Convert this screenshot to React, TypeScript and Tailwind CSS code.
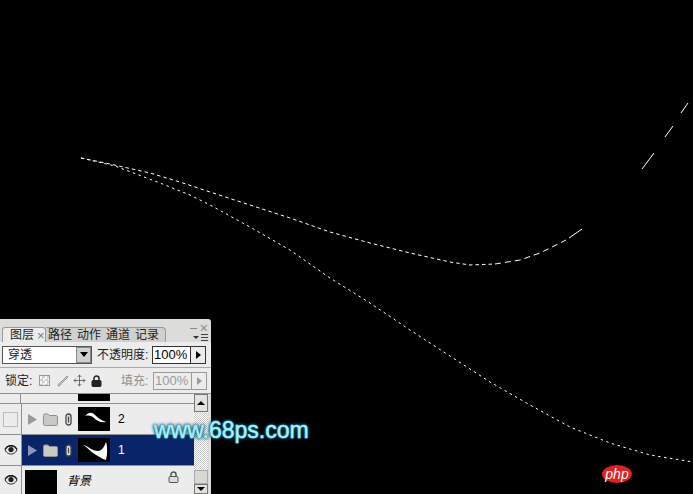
import type { ReactNode } from "react";
import { Move } from "lucide-react";

const cjk = "font-['Liberation_Sans','Noto_Sans_CJK_SC',sans-serif]";

const Eye = () => (
    <svg width="14" height="10" viewBox="0 0 14 10">
        <path d="M1 5C3 1.500 5 1 7 1s4 .5 6 4c-2 3.500-4 4-6 4S3 8.500 1 5z" fill="#e8e8e8" stroke="#222" strokeWidth="1" />
        <circle cx="7" cy="4.500" r="2.600" fill="#222" />
        <path d="M1 4C3 1 5 .5 7 .5s4 .5 6 3.500" fill="none" stroke="#111" strokeWidth="1.300" />
    </svg>
);

const Folder = () => (
    <svg width="15" height="13" viewBox="0 0 15 13">
        <path d="M.5 2.500c0-1 .5-1.500 1.500-1.500h3l1.500 1.500H13c1 0 1.500.5 1.500 1.500v7c0 1-.5 1.500-1.500 1.500H2c-1 0-1.500-.5-1.500-1.500z" fill="#c9c9c6" stroke="#8f8f8c" />
    </svg>
);

const Link = () => (
    <svg width="7" height="13" viewBox="0 0 7 13">
        <rect x="1" y="1" width="5" height="11" rx="2.500" fill="#e8e8e8" stroke="#444" strokeWidth="1.300" />
        <path d="M3.500 3.500v6" stroke="#444" strokeWidth="1.300" />
    </svg>
);

const Arrow = ({ color }: { color: string }) => (
    <svg width="9" height="11" viewBox="0 0 9 11">
        <path d="M0 0l9 5.500L0 11z" fill={color} />
    </svg>
);

const LockIcon = ({ open }: { open?: boolean }) => (
    <svg width="11" height="12" viewBox="0 0 11 12">
        <path d="M3 6V3.500a2.500 2.500 0 015 0V6" fill="none" stroke={open ? "#555" : "#222"} strokeWidth="1.500" />
        <rect x="1" y="5.500" width="9" height="6" rx="1" fill={open ? "#dcdcdc" : "#222"} stroke={open ? "#555" : "#222"} />
    </svg>
);

const Thumb = ({ children, className }: { children?: ReactNode; className: string }) => (
    <svg viewBox="0 0 32 24" className={`block shrink-0 bg-black ${className}`}>
        {children}
    </svg>
);

const Spin = ({ disabled }: { disabled?: boolean }) => (
    <div className={`flex h-[18px] border ${disabled ? "border-[#9a9a9a] text-[#9a9a9a]" : "border-[#333] bg-white text-black"}`}>
        <div className="flex w-[37px] items-center pl-px text-[13px] leading-none">100%</div>
        <div className={`flex w-[15px] items-center justify-center border-l ${disabled ? "border-[#9a9a9a]" : "border-[#333] bg-[#ececec]"}`}>
            <div className="h-0 w-0 border-y-[4px] border-l-[5px] border-y-transparent border-l-current" />
        </div>
    </div>
);

const tabs = ["路径", "动作", "通道", "记录"];

const LayersPanel = () => (
    <div className={`absolute bottom-0 left-0 flex h-[175px] w-[211px] flex-col rounded-tr-[3px] bg-[#dcdcda] text-[12px] text-[#222] ${cjk}`}>
        <div className="relative flex h-[23px] shrink-0 items-end pl-[2px]">
            <div className="flex h-[15px] w-[44px] shrink-0 items-center gap-[3px] whitespace-nowrap rounded-t-[3px] border-x border-t border-[#999] bg-[#ececec] pl-[7px]">
                <span>图层</span>
                <span className="text-[13px] leading-none text-[#777]">×</span>
            </div>
            <div className="flex h-[15px] w-[120px] shrink-0 items-center gap-[5px] whitespace-nowrap rounded-tr-[4px] border-r border-t border-[#999] bg-[#d0d0ce] pl-[2px]">
                {tabs.map((t) => (
                    <span key={t}>{t}</span>
                ))}
            </div>
            <div className="absolute right-[3px] top-[2px] flex items-center gap-[3px] text-[#8c8c8c]">
                <div className="h-px w-[7px] bg-[#8c8c8c]" />
                <span className="text-[14px] leading-none">×</span>
            </div>
            <div className="absolute bottom-[1px] right-[3px] flex items-center gap-[2px]">
                <div className="h-0 w-0 border-x-[3px] border-t-[3px] border-x-transparent border-t-[#333]" />
                <div className="flex h-[7px] w-[7px] flex-col justify-between">
                    <div className="h-px bg-[#444]" />
                    <div className="h-px bg-[#444]" />
                    <div className="h-px bg-[#444]" />
                </div>
            </div>
        </div>

        <div className="flex h-[26px] shrink-0 items-center border-b border-[#a8a8a8] bg-[#ececec] pl-[2px]">
            <div className="flex h-[18px] w-[90px] items-stretch border border-[#555] bg-white">
                <div className="flex-1 pl-[5px] text-[12px] leading-[16px]">穿透</div>
                <div className="flex w-[15px] items-center justify-center border border-[#888] bg-[#d0d0cc]">
                    <div className="h-0 w-0 border-x-[4px] border-t-[5px] border-x-transparent border-t-black" />
                </div>
            </div>
            <span className="ml-[5px] w-[55px] whitespace-nowrap text-[12px]">不透明度:</span>
            <Spin />
        </div>

        <div className="flex h-[26px] shrink-0 items-center border-b border-[#8f8f8f] bg-[#ececec] pl-[5px]">
            <span className="w-[34px] whitespace-nowrap">锁定:</span>
            <div className="h-[11px] w-[11px] border border-[#999] bg-[repeating-conic-gradient(#cfcfcf_0_25%,#f6f6f6_0_50%)] bg-[length:5px_5px]" />
            <svg width="12" height="12" viewBox="0 0 12 12" className="ml-[7px]">
                <path d="M1 11c0-2 1-3 2.500-3.500L10 1l1 1-6.500 6.500C4 10 3 11 1 11z" fill="#c4c4c4" stroke="#8a8a8a" strokeWidth=".8" />
            </svg>
            <Move size={13} strokeWidth={1.500} className="ml-[4px] text-[#555]" />
            <div className="ml-[5px]">
                <LockIcon />
            </div>
            <span className="ml-[19px] w-[32px] whitespace-nowrap text-[#8f8f8f]">填充:</span>
            <Spin disabled />
        </div>

        <div className="flex min-h-0 flex-1">
            <div className="flex w-[194px] flex-col">
                <div className="flex h-[10px] shrink-0 border-b border-[#8f8f8f] bg-[#ececec]">
                    <div className="w-[21px] border-r border-[#8f8f8f]" />
                    <div className="ml-[57px] h-[7px] w-[32px] bg-black" />
                </div>
                <div className="flex h-[31px] shrink-0 items-center border-b border-[#8f8f8f] bg-[#ececec]">
                    <div className="flex h-full w-[22px] shrink-0 items-center justify-center border-r border-[#8f8f8f]">
                        <div className="h-[15px] w-[15px] border border-[#bbb]" />
                    </div>
                    <div className="ml-[6px]"><Arrow color="#9a9a9a" /></div>
                    <div className="ml-[6px]"><Folder /></div>
                    <div className="ml-[7px]"><Link /></div>
                    <Thumb className="ml-[6px] h-[24px] w-[32px]">
                        <path d="M7 9c4-4 7-4 10-1 3 3 6 5 11 7-5 1-9-1-12-4-2-2-5-3-9-2z" fill="#fff" />
                    </Thumb>
                    <span className="ml-[8px] text-[12px] text-black">2</span>
                </div>
                <div className="flex h-[31px] shrink-0 items-center border-b border-[#8f8f8f] bg-[#0a246a] text-white">
                    <div className="flex h-full w-[22px] shrink-0 items-center justify-center border-r border-[#8f8f8f] bg-[#ececec]">
                        <Eye />
                    </div>
                    <div className="ml-[6px]"><Arrow color="#8c96b8" /></div>
                    <div className="ml-[6px]"><Folder /></div>
                    <div className="ml-[7px]"><Link /></div>
                    <Thumb className="ml-[6px] h-[24px] w-[32px]">
                        <path d="M5 7c5 1 9 6 15 6 3 0 6-3 8-9 2 6 1 14 0 18-4-1-8-4-13-7-3-2-6-6-10-8z" fill="#fff" />
                    </Thumb>
                    <span className="ml-[8px] text-[12px]">1</span>
                </div>
                <div className="flex flex-1 items-start bg-[#ececec]">
                    <div className="flex h-full w-[22px] shrink-0 items-center justify-center border-r border-[#8f8f8f]">
                        <Eye />
                    </div>
                    <div className="ml-[3px] mt-[4px] h-[24px] w-[32px] bg-black" />
                    <span className="ml-[10px] mt-[6px] italic text-[12px] text-black">背景</span>
                    <div className="ml-[77px] mt-[5px]"><LockIcon open /></div>
                </div>
            </div>
            <div className="flex w-[14px] flex-col bg-[repeating-conic-gradient(#ffffff_0_25%,#c8c8c8_0_50%)] bg-[length:2px_2px]">
                <div className="flex h-[18px] items-center justify-center border border-[#777] bg-[#e2e2de]">
                    <div className="h-0 w-0 border-x-[4px] border-b-[4px] border-x-transparent border-b-black" />
                </div>
                <div className="flex-1" />
                <div className="h-[14px] border border-[#aaa] bg-[#d8d8d2]" />
                <div className="flex h-[10px] items-center justify-center border border-[#777] bg-[#e2e2de]">
                    <div className="h-0 w-0 border-x-[4px] border-t-[4px] border-x-transparent border-t-black" />
                </div>
            </div>
            <div className="w-[3px] bg-[#dcdcda]" />
        </div>
    </div>
);

const App = () => {
    return (
        <div className="relative h-[494px] w-[693px] overflow-hidden bg-black">
            <svg width="693" height="494" viewBox="0 0 693 494" className="absolute inset-0" fill="none" stroke="#fff" strokeWidth="1">
                <path d="M81 158L110 164L150 173L180 182L210 192L250 205L290 218L330 232L370 243L410 253L450 262L470 265L495 264" strokeDasharray="3.500 3" />
                <path d="M495 264L520 260L540 253L558 244L566 240" strokeDasharray="6 4" />
                <path d="M569 238L582 229M642 169L654 153M665 137L673 126M681 113L688 103" />
                <path d="M81 158L115 166L160 183L190 195L210 205L250 227L290 250L330 278L370 303L410 330L450 356L490 382L530 405L570 427L610 443L650 455L693 462" strokeDasharray="2.500 3.500" />
            </svg>

            <LayersPanel />

            <div className="absolute left-[154px] top-[416px] font-['Liberation_Sans',sans-serif] text-[23px] font-normal leading-[28px] text-[#a8f0f6] [-webkit-text-stroke:0.5px_#a8f0f6] [text-shadow:0_0_2px_#0a5f84,0_0_3px_#0a5f84,0_0_3px_#0a5f84,0_0_4px_#07465f]">
                www.68ps.com
            </div>

            <div className="absolute left-[602px] top-[465px] flex h-[18px] w-[30px] items-center justify-center rounded-[50%] bg-[#e02024] font-['Liberation_Sans',sans-serif] text-[14px] italic leading-none text-white">
                php
            </div>
        </div>
    );
};

export default App;
